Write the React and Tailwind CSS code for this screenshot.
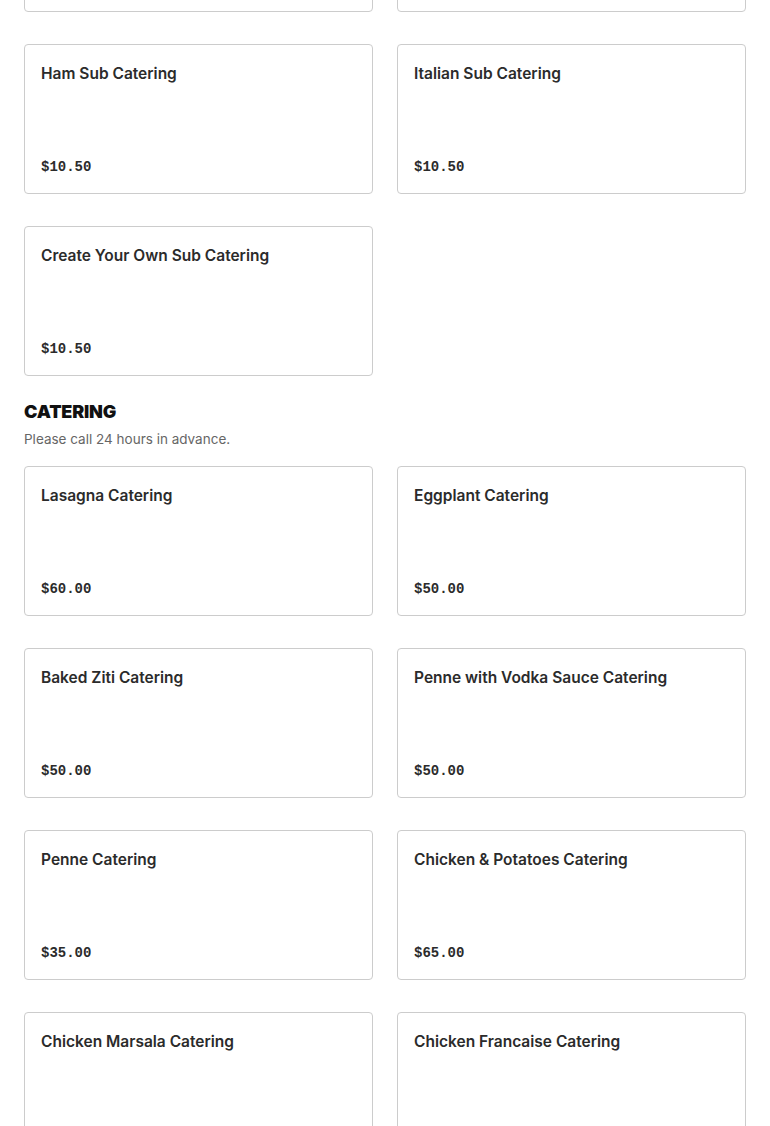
import React from 'react';

// top row is scrolled out of view; only the bottom edge of those cards shows
const subs = [
  { name: 'Ham Sub Catering', price: '$10.50' },
  { name: 'Italian Sub Catering', price: '$10.50' },
  { name: 'Create Your Own Sub Catering', price: '$10.50' },
];

const catering = [
  { name: 'Lasagna Catering', price: '$60.00' },
  { name: 'Eggplant Catering', price: '$50.00' },
  { name: 'Baked Ziti Catering', price: '$50.00' },
  { name: 'Penne with Vodka Sauce Catering', price: '$50.00' },
  { name: 'Penne Catering', price: '$35.00' },
  { name: 'Chicken & Potatoes Catering', price: '$65.00' },
  { name: 'Chicken Marsala Catering', price: '$60.00' },
  { name: 'Chicken Francaise Catering', price: '$60.00' },
];

const ItemCard = ({ name, price }) => (
  <div className="flex h-[150px] flex-col justify-between rounded-[4px] border border-[#cccccc] bg-white px-4 pt-[17px] pb-4">
    <p className="text-[15.5px] font-semibold leading-6 text-[#2b2b2b]">{name}</p>
    <p className="font-['Liberation_Mono',monospace] text-[14px] font-bold leading-5 text-[#2b2b2b]">{price}</p>
  </div>
);

const Grid = ({ items }) => (
  <div className="grid grid-cols-2 gap-x-6 gap-y-8">
    {items.map((item) => (
      <ItemCard key={item.name} {...item} />
    ))}
  </div>
);

export default function App() {
  return (
    <div className="h-[1126px] overflow-hidden bg-white font-['Inter',sans-serif]">
      <div className="mt-[-138px] px-6">
        <div className="mb-8 grid grid-cols-2 gap-x-6">
          <div className="h-[150px] rounded-[4px] border border-[#cccccc]" />
          <div className="h-[150px] rounded-[4px] border border-[#cccccc]" />
        </div>
        <Grid items={subs} />
        <section className="pt-6">
          <h2 className="text-[18px] font-black uppercase leading-6 tracking-[-0.01em] text-[#111111]">Catering</h2>
          <p className="mt-[5px] text-[13.5px] leading-5 text-[#666666]">Please call 24 hours in advance.</p>
          <div className="mt-[17px]">
            <Grid items={catering} />
          </div>
        </section>
      </div>
    </div>
  );
}
